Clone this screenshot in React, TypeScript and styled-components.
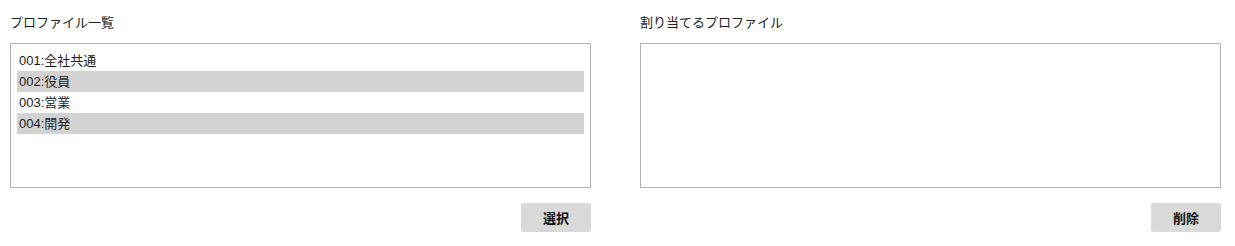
import styled, { createGlobalStyle } from 'styled-components';

const PROFILES = [
    { code: '001', name: '全社共通', selected: false },
    { code: '002', name: '役員', selected: true },
    { code: '003', name: '営業', selected: false },
    { code: '004', name: '開発', selected: true },
];

const GlobalStyle = createGlobalStyle`
    html, body {
        margin: 0;
        padding: 0;
        background: #ffffff;
    }
    body {
        font-family: "Liberation Sans", "Noto Sans CJK JP", sans-serif;
        color: #222222;
    }
`;

export default function App() {
    return (
        <>
            <GlobalStyle />
            <Page>
                <Column>
                    <Label>プロファイル一覧</Label>
                    <ListBox>
                        {PROFILES.map((p) => (
                            <Option key={p.code} $selected={p.selected}>
                                {p.code}:{p.name}
                            </Option>
                        ))}
                    </ListBox>
                    <Actions>
                        <ActionButton type="button">選択</ActionButton>
                    </Actions>
                </Column>
                <Column>
                    <Label>割り当てるプロファイル</Label>
                    <ListBox />
                    <Actions>
                        <ActionButton type="button">削除</ActionButton>
                    </Actions>
                </Column>
            </Page>
        </>
    );
}

const Page = styled.div`
    display: grid;
    grid-template-columns: 581px 581px;
    column-gap: 49px;
    padding: 15px 10px 0;
`;

const Column = styled.section`
    display: flex;
    flex-direction: column;
`;

const Label = styled.div`
    font-size: 13px;
    line-height: 16px;
    height: 16px;
    margin-bottom: 12px;
    color: #222222;
`;

const ListBox = styled.ul`
    list-style: none;
    margin: 0;
    height: 145px;
    box-sizing: border-box;
    padding: 6px;
    border: 1px solid #b3b3b3;
    background: #ffffff;
    overflow: hidden;
`;

const Option = styled.li<{ $selected: boolean }>`
    height: 21px;
    line-height: 21px;
    padding-left: 2px;
    font-size: 13px;
    color: #1e1e1e;
    background: ${({ $selected }) => ($selected ? '#d3d3d3' : 'transparent')};
`;

const Actions = styled.div`
    display: flex;
    justify-content: flex-end;
    padding-top: 15px;
`;

const ActionButton = styled.button`
    width: 70px;
    height: 29px;
    border: none;
    border-radius: 3px;
    background: #d9d9d9;
    color: #111111;
    font-family: "Liberation Sans", "Noto Sans CJK JP", sans-serif;
    font-size: 13px;
    font-weight: 700;
    cursor: pointer;
`;
